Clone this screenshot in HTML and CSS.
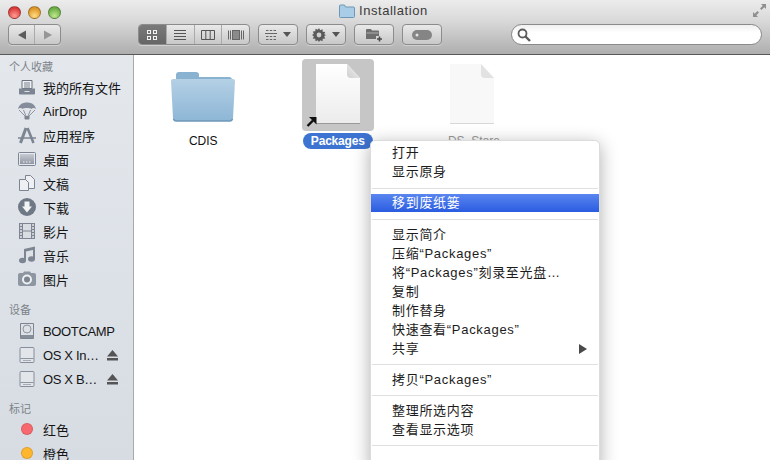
FILE: index.html
```html
<!DOCTYPE html>
<html lang="zh-CN">
<head>
<meta charset="utf-8">
<title>Installation</title>
<link rel="stylesheet" href="styles.css">
</head>
<body>
<div class="window">
  <header class="chrome">
    <div class="titlebar">
      <div class="lights"><i class="light red"></i><i class="light yellow"></i><i class="light green"></i></div>
      <div class="title">
        <svg width="16" height="14" viewBox="0 0 16 14"><path d="M.5 3V2a1 1 0 0 1 1-1h4l1 2h8a1 1 0 0 1 1 1v8.500a1 1 0 0 1-1 1h-13a1 1 0 0 1-1-1z" fill="#a9cde6" stroke="#6f97b5"/></svg>
        <span>Installation</span>
      </div>
      <svg class="fullscreen" width="15" height="15" viewBox="0 0 15 15"><path d="M9 1h5v5l-1.700-1.700L9.500 7 8 5.500l2.700-2.800zM6 14H1V9l1.700 1.700L5.500 8 7 9.500l-2.700 2.800z" fill="#8f8f8f"/></svg>
    </div>
    <div class="toolbar">
      <div class="btn nav">
        <span class="cell"><svg width="10" height="10" viewBox="0 0 10 10"><path d="M1 5l8-4.500v9z" fill="#5c5c5c"/></svg></span>
        <span class="cell"><svg width="10" height="10" viewBox="0 0 10 10"><path d="M9 5L1 .5v9z" fill="#969696"/></svg></span>
      </div>
      <div class="btn views">
        <span class="cell active"><svg width="12" height="12" viewBox="0 0 12 12" fill="none" stroke="#f2f2f2"><rect x="1.500" y="1.500" width="3" height="3"/><rect x="7.500" y="1.500" width="3" height="3"/><rect x="1.500" y="7.500" width="3" height="3"/><rect x="7.500" y="7.500" width="3" height="3"/></svg></span>
        <span class="cell"><svg width="12" height="12" viewBox="0 0 12 12" stroke="#555"><path d="M0 1.500h12M0 4.500h12M0 7.500h12M0 10.500h12"/></svg></span>
        <span class="cell"><svg width="14" height="12" viewBox="0 0 14 12" fill="none" stroke="#555"><path d="M.5 1.500h13v9H.5zM4.800 1.500v9M9.200 1.500v9"/></svg></span>
        <span class="cell"><svg width="16" height="12" viewBox="0 0 16 12" stroke="#666" fill="none"><path d="M.5 1.500v9M2.500 1.500v9M13.500 1.500v9M15.500 1.500v9"/><rect x="4.500" y="1.500" width="7" height="9" fill="#8a8a8a"/></svg></span>
      </div>
      <div class="btn drop">
        <svg width="12" height="12" viewBox="0 0 12 12" fill="none" stroke="#666"><path d="M1 1.500h2.500M4.800 1.500h2.400M8.500 1.500H11M0 4.500h12M1 7.500h2.500M4.800 7.500h2.400M8.500 7.500H11M1 10.500h2.500M4.800 10.500h2.400M8.500 10.500H11"/></svg>
        <i class="caret"></i>
      </div>
      <div class="btn drop">
        <svg width="14" height="14" viewBox="0 0 14 14"><path d="M7 0l1.200 2.200 2.300-1 .2 2.500 2.500.3-1 2.300L14 7l-1.800 1.200 1 2.300-2.500.3-.2 2.500-2.300-1L7 14l-1.200-1.700-2.300 1-.2-2.500-2.500-.3 1-2.300L0 7l1.800-1.200-1-2.300 2.500-.3.200-2.500 2.300 1z" fill="#5a5a5a"/><circle cx="7" cy="7" r="2.400" fill="#cfcfcf"/></svg>
        <i class="caret"></i>
      </div>
      <div class="btn plain">
        <svg width="18" height="15" viewBox="0 0 18 15"><path d="M1 12V3a1 1 0 0 1 1-1h4l1 1.500h6a1 1 0 0 1 1 1V9h-3v3z" fill="#6e6e6e"/><path d="M1.500 6h12" stroke="#b0b0b0"/><path d="M14.500 9.500v5M12 12h5" stroke="#4a4a4a" stroke-width="1.600"/></svg>
      </div>
      <div class="btn plain">
        <svg width="20" height="10" viewBox="0 0 20 10"><rect width="20" height="10" rx="5" fill="#858585"/><circle cx="5" cy="5" r="1.500" fill="#e2e2e2"/></svg>
      </div>
      <div class="search">
        <svg width="14" height="14" viewBox="0 0 14 14" fill="none" stroke="#5c5c5c"><circle cx="5.500" cy="5.500" r="4" stroke-width="1.800"/><path d="M8.500 8.500l4.500 4.500" stroke-width="2.400"/></svg>
      </div>
    </div>
  </header>

  <div class="body">
    <nav class="sidebar">
      <h2 class="heading first">个人收藏</h2>
      <a class="item"><svg class="ico" width="20" height="20" viewBox="0 0 20 20"><path d="M5 3.500h10v8H5z" fill="#eef0f3" stroke="#69727e"/><path d="M7 6h6M7 8h6M7 10h6" stroke="#7b838e"/><path d="M2 11.500h16v5a1 1 0 0 1-1 1H3a1 1 0 0 1-1-1z" fill="#7c8591"/><path d="M7.500 14.500h5" stroke="#dfe2e6"/></svg><span>我的所有文件</span></a>
      <a class="item"><svg class="ico" width="20" height="20" viewBox="0 0 20 20"><path d="M1 8c1-4.500 4.500-6.500 9-6.500s8 2 9 6.500c-1.800-1.300-3.600-1.300-4.500 0-1.300-1.300-7.700-1.300-9 0C4.600 6.700 2.800 6.700 1 8z" fill="#848d99"/><path d="M2 9l7 7M18 9l-7 7M6.500 9L9 15M13.500 9L11 15" stroke="#8c95a0"/><path d="M7.500 15h5v2.500a1 1 0 0 1-1 1h-3a1 1 0 0 1-1-1z" fill="#7c8591"/></svg><span>AirDrop</span></a>
      <a class="item"><svg class="ico" width="20" height="20" viewBox="0 0 20 20" fill="none" stroke="#7c8591"><path d="M1 13h18" stroke-width="1.500"/><path d="M9 3L3.500 18" stroke-width="3"/><path d="M10.500 3l6 15" stroke-width="2.500"/></svg><span>应用程序</span></a>
      <a class="item"><svg class="ico" width="20" height="20" viewBox="0 0 20 20"><defs><linearGradient id="desk" x1="0" y1="0" x2="0" y2="1"><stop offset="0" stop-color="#c6cbd2"/><stop offset="1" stop-color="#8f97a3"/></linearGradient></defs><rect x="1.500" y="3.500" width="17" height="13" rx="1" fill="#e6e9ed" stroke="#7c8591"/><rect x="3" y="5" width="14" height="10" fill="url(#desk)"/><path d="M6 13h1.500M9 13h1.500M12 13h1.500" stroke="#f2f2f2"/></svg><span>桌面</span></a>
      <a class="item"><svg class="ico" width="20" height="20" viewBox="0 0 20 20" fill="#eef0f3" stroke="#7c8591"><path d="M2.500 6.500h6l3 3v8h-9z"/><path d="M8.500 2.500h5l4 4v9h-6v-6l-3-3z"/></svg><span>文稿</span></a>
      <a class="item"><svg class="ico" width="20" height="20" viewBox="0 0 20 20"><circle cx="10" cy="10" r="9" fill="#6f7985"/><path d="M7.500 4.500h5v5H15l-5 6-5-6h2.500z" fill="#f2f3f5"/></svg><span>下载</span></a>
      <a class="item"><svg class="ico" width="20" height="20" viewBox="0 0 20 20"><rect x="2" y="2" width="16" height="16" fill="#7c8591"/><rect x="6" y="3" width="8" height="6.500" fill="#d9dce1"/><rect x="6" y="10.500" width="8" height="6.500" fill="#d9dce1"/><path d="M3 4h2M3 7h2M3 10h2M3 13h2M3 16h2M15 4h2M15 7h2M15 10h2M15 13h2M15 16h2" stroke="#e6e8eb" stroke-width="1.500"/></svg><span>影片</span></a>
      <a class="item"><svg class="ico" width="20" height="20" viewBox="0 0 20 20" fill="#7c8591"><path d="M7 4l11-2.500v3L9 6.500V15H7zM16 2h2v12h-2z"/><ellipse cx="5.500" cy="15.500" rx="3.500" ry="2.800"/><ellipse cx="14.500" cy="14" rx="3.500" ry="2.800"/></svg><span>音乐</span></a>
      <a class="item"><svg class="ico" width="20" height="20" viewBox="0 0 20 20"><path d="M1 6a2 2 0 0 1 2-2h3l1-1.500h6L14 4h3a2 2 0 0 1 2 2v9a2 2 0 0 1-2 2H3a2 2 0 0 1-2-2z" fill="#8d96a1"/><circle cx="10" cy="10.500" r="5" fill="#eef0f2"/><circle cx="10" cy="10.500" r="3" fill="#7c8591"/></svg><span>图片</span></a>

      <h2 class="heading devices">设备</h2>
      <a class="item"><svg class="ico" width="20" height="20" viewBox="0 0 20 20"><path d="M3.500 2.500h13v15h-13z" fill="#dde0e5" stroke="#7c8591"/><circle cx="10" cy="8" r="4" fill="none" stroke="#8d95a0"/><rect x="4" y="14" width="12" height="3" fill="#858e99"/></svg><span class="drive">BOOTCAMP</span></a>
      <a class="item"><svg class="ico" width="20" height="20" viewBox="0 0 20 20"><use href="#disk"/></svg><span class="grow drive">OS X In…</span><svg class="eject" width="11" height="11" viewBox="0 0 11 11" fill="#555"><path d="M5.500 0l5.500 6.500H0zM0 8h11v2.500H0z"/></svg></a>
      <a class="item"><svg class="ico" width="20" height="20" viewBox="0 0 20 20"><use href="#disk"/></svg><span class="grow drive">OS X B…</span><svg class="eject" width="11" height="11" viewBox="0 0 11 11" fill="#555"><path d="M5.500 0l5.500 6.500H0zM0 8h11v2.500H0z"/></svg></a>

      <h2 class="heading tags">标记</h2>
      <a class="item"><i class="tag tag-red"></i><span>红色</span></a>
      <a class="item"><i class="tag tag-orange"></i><span>橙色</span></a>
      <svg class="defs" width="0" height="0"><defs><g id="disk"><path d="M4 2.500h12a1 1 0 0 1 1 1v13a1 1 0 0 1-1 1H4a1 1 0 0 1-1-1v-13a1 1 0 0 1 1-1z" fill="#e2e5e9" stroke="#858e99"/><path d="M3.500 13.500h13" stroke="#8d95a0"/><path d="M6 15.500h8" stroke="#a5acb5"/></g></defs></svg>
    </nav>

    <main class="files">
      <figure class="file">
        <div class="thumb">
          <svg class="folder" width="66" height="50" viewBox="0 0 66 50"><defs><linearGradient id="fold" x1="0" y1="0" x2="0" y2="1"><stop offset="0" stop-color="#b4d0e5"/><stop offset="1" stop-color="#8db6d6"/></linearGradient></defs><path d="M6 3a3 3 0 0 1 3-3h17a3 3 0 0 1 3 3v2h30a3 3 0 0 1 3 3v4H6z" fill="#89b2d1"/><path d="M1 9a2 2 0 0 1 2-2h60a2 2 0 0 1 2 2l-2 37a3 3 0 0 1-3 3H6a3 3 0 0 1-3-3z" fill="url(#fold)"/><path d="M3.500 47a3 3 0 0 0 3 2h53a3 3 0 0 0 3-2" fill="none" stroke="#6d97b8" stroke-width="1.500"/></svg>
        </div>
        <figcaption class="name">CDIS</figcaption>
      </figure>
      <figure class="file selected">
        <div class="thumb">
          <svg class="page" width="46" height="60" viewBox="0 0 46 60"><defs><linearGradient id="pg" x1="0" y1="0" x2="0" y2="1"><stop offset="0" stop-color="#fff"/><stop offset="1" stop-color="#ececec"/></linearGradient><linearGradient id="curl" x1="0" y1="1" x2="1" y2="0"><stop offset="0" stop-color="#cfcfcf"/><stop offset="1" stop-color="#f2f2f2"/></linearGradient></defs><path d="M1 0h31l13 14v45H1z" fill="url(#pg)"/><path d="M1 59.500h44" stroke="#9a9a9a"/><path d="M32 0l13 14H36q-4 0-4-4z" fill="url(#curl)"/></svg>
          <svg class="alias" width="11" height="11" viewBox="0 0 11 11"><path d="M1.500 10L7 4.500" stroke="#111" stroke-width="2.400"/><path d="M3 1h7.500v7.500z" fill="#111"/></svg>
        </div>
        <figcaption class="name">Packages</figcaption>
      </figure>
      <figure class="file ghost">
        <div class="thumb">
          <svg class="page" width="46" height="60" viewBox="0 0 46 60"><path d="M1 0h31l13 14v45H1z" fill="#f8f8f8"/><path d="M1 59.500h44" stroke="#d8d8d8"/><path d="M32 0l13 14H36q-4 0-4-4z" fill="#e2e2e2"/></svg>
        </div>
        <figcaption class="name">.DS_Store</figcaption>
      </figure>
    </main>
  </div>

  <div class="menu">
    <div class="mi">打开</div>
    <div class="mi">显示原身</div>
    <hr class="sep lead">
    <div class="mi hot">移到废纸篓</div>
    <hr class="sep lead">
    <div class="mi">显示简介</div>
    <div class="mi">压缩“Packages”</div>
    <div class="mi">将“Packages”刻录至光盘…</div>
    <div class="mi">复制</div>
    <div class="mi">制作替身</div>
    <div class="mi">快速查看“Packages”</div>
    <div class="mi sub">共享<i class="arrow"></i></div>
    <hr class="sep">
    <div class="mi">拷贝“Packages”</div>
    <hr class="sep">
    <div class="mi">整理所选内容</div>
    <div class="mi">查看显示选项</div>
    <hr class="sep">
  </div>
</div>
</body>
</html>
```
FILE: styles.css
```css
* { box-sizing: border-box; }
html, body { margin: 0; height: 100%; overflow: hidden; }
body { font-family: "Liberation Sans", "Noto Sans CJK SC", sans-serif; font-size: 13px; color: #111; background: #fff; }
.window { position: relative; width: 770px; height: 460px; display: flex; flex-direction: column; overflow: hidden; }

.chrome { height: 55px; flex: none; background: linear-gradient(#ececec, #d8d8d8 40%, #aeaeae); border-bottom: 1px solid #585858; }
.titlebar { height: 23px; display: flex; align-items: center; position: relative; padding: 1px 0 0 8px; }
.lights { display: flex; gap: 7px; }
.light { width: 13px; height: 13px; border-radius: 50%; border: 1px solid rgba(0,0,0,.3); }
.red { background: radial-gradient(circle at 50% 80%, #ff9d92, #dc3b3c 72%); }
.yellow { background: radial-gradient(circle at 50% 80%, #ffdc85, #de9626 72%); }
.green { background: radial-gradient(circle at 50% 80%, #bfe88d, #6cae45 72%); }
.title { position: absolute; left: 339px; top: 3px; display: flex; align-items: center; gap: 4px; font-size: 13px; color: #3a3a3a; letter-spacing: .55px; }
.fullscreen { position: absolute; right: 3px; top: 3px; }

.toolbar { height: 31px; display: flex; align-items: flex-start; padding: 1px 8px 0; gap: 8px; }
.btn { height: 21px; display: flex; align-items: center; justify-content: center; border: 1px solid #8c8c8c; border-radius: 4px; background: linear-gradient(#e9e9e9, #c8c8c8); box-shadow: 0 1px 0 rgba(255,255,255,.35); }
.cell { flex: 1; height: 100%; display: flex; align-items: center; justify-content: center; border-left: 1px solid #aaa; }
.cell:first-child { border-left: 0; }
.nav { width: 53px; margin-right: 69px; }
.views { width: 112px; overflow: hidden; }
.active { background: linear-gradient(#7a7a7a, #666); }
.drop { width: 40px; gap: 6px; }
.plain { width: 40px; }
.caret { width: 0; height: 0; border: 4px solid transparent; border-top: 5px solid #555; border-bottom: 0; }
.search { width: 251px; height: 21px; margin-left: 61px; border: 1px solid #8a8a8a; border-radius: 11px; background: linear-gradient(#f0f0f0, #fff 40%); display: flex; align-items: center; padding-left: 5px; }

.body { flex: 1; display: flex; min-height: 0; }
.sidebar { width: 134px; flex: none; background: linear-gradient(#e4e8ed, #d7dce3); border-right: 1px solid #a9a9a9; display: flex; flex-direction: column; overflow: hidden; }
.heading { margin: 0; padding: 10px 0 0 9px; flex: none; font-size: 11px; line-height: 16px; font-weight: normal; color: #7d8389; }
.heading.first { height: 20px; padding-top: 4px; }
.heading.devices { height: 28px; padding-top: 11px; }
.heading.tags { height: 26px; padding-top: 10px; }
.item { height: 24px; flex: none; display: flex; align-items: center; padding-left: 17px; font-size: 13px; color: #141414; }
.ico { flex: none; margin-right: 6px; }
.grow { flex: 1; }
.drive { letter-spacing: -.35px; }
.eject { margin-right: 15px; }
.tag { width: 12px; height: 12px; border-radius: 50%; margin: 0 10px 0 4px; flex: none; border: 1px solid rgba(0,0,0,.12); }
.tag-red { background: #f8696f; }
.tag-orange { background: #fdb62e; }
.defs { position: absolute; }

.files { flex: 1; display: grid; grid-template-columns: repeat(3, 134.5px); grid-auto-rows: min-content; padding: 4px 0 0 2px; }
.file { margin: 0; display: flex; flex-direction: column; align-items: center; }
.thumb { position: relative; width: 72px; height: 72px; border-radius: 4px; display: flex; align-items: center; justify-content: center; }
.selected .thumb { background: #c6c6c6; }
.page { margin-bottom: 3px; }
.folder { margin-top: 3px; }
.alias { position: absolute; left: 4px; bottom: 4px; }
.name { margin-top: 2px; height: 16px; padding: 0 8px; border-radius: 8px; font-size: 12px; line-height: 16px; color: #111; }
.selected .name { background: #3d74d1; color: #fff; font-weight: bold; letter-spacing: -.2px; }
.ghost .name { color: #999; }

.menu { position: absolute; left: 370px; top: 140px; width: 230px; height: 330px; padding-top: 2px; background: #fff; border: 1px solid #dcdcdc; border-radius: 5px 5px 0 0; box-shadow: 0 4px 18px rgba(0,0,0,.32); }
.mi { position: relative; height: 19px; line-height: 19px; padding-left: 21px; font-size: 13px; color: #1c1c1c; letter-spacing: .7px; white-space: nowrap; }
.hot { height: 18px; line-height: 18px; color: #fff; background: linear-gradient(#5a86f0, #2a5ce0); }
.sep { height: 1px; margin: 6px 1px 5px; border: 0; background: #e0e0e0; }
.sep.lead { margin-top: 7px; }
.arrow { position: absolute; right: 12px; top: 5px; width: 0; height: 0; border: 5px solid transparent; border-left: 8px solid #4a4a4a; border-right: 0; }
```
